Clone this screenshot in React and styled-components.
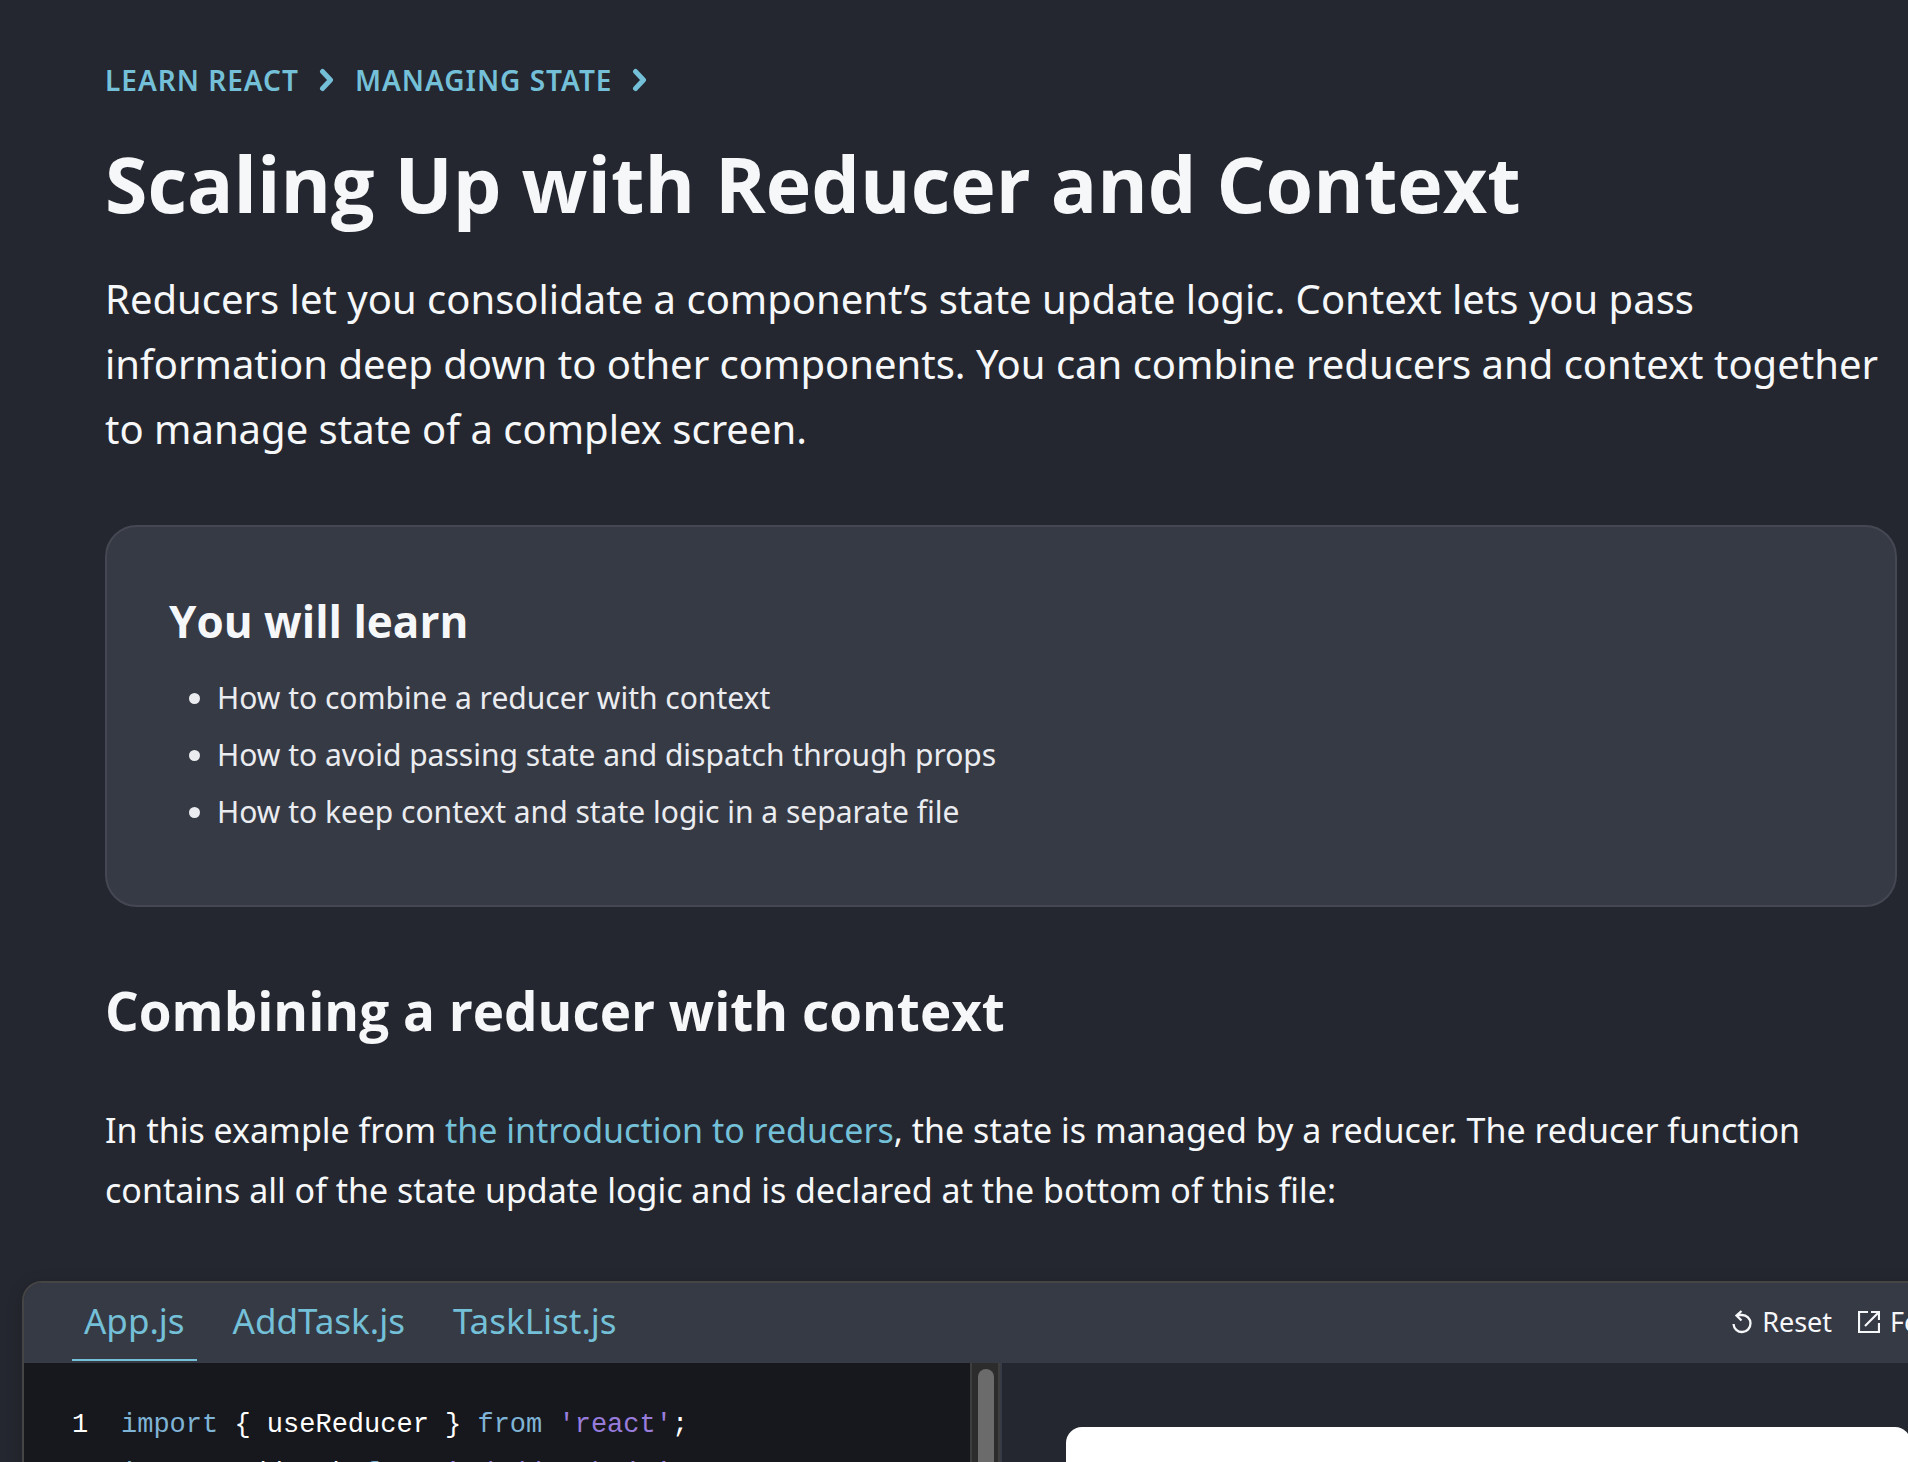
import React from "react"
import styled, { createGlobalStyle } from "styled-components"

const font = {
  heading: `"Open Sans", "Noto Sans", sans-serif`,
  body: `"Noto Sans", "Open Sans", sans-serif`,
  code: `"Liberation Mono", "DejaVu Sans Mono", monospace`,
}

const GlobalStyle = createGlobalStyle`
  :root {
    --clr-page: #24272f;
    --clr-card: #363a45;
    --clr-code: #17181d;
    --clr-border: #454852;
    --clr-border-dark: #454545;
    --clr-text: #f6f7f9;
    --clr-list: #ebecf0;
    --clr-link: #74c0d8;
  }

  * {
    box-sizing: border-box;
  }

  html,
  body {
    margin: 0;
    overflow: hidden;
    background: var(--clr-page);
  }

  h1,
  h2,
  h3,
  p,
  ul,
  pre {
    margin: 0;
  }

  a {
    color: var(--clr-link);
    text-decoration: none;
  }
`

const Page = styled.main`
  height: 100vh;
  overflow: hidden;
  padding: 60px 0 0 22px;
  color: var(--clr-text);
  font-family: ${font.body};
`

const Content = styled.div`
  padding: 0 11px 0 83px;
`

const Breadcrumbs = styled.nav`
  display: flex;
  align-items: center;
  gap: 20px;
`

const Crumb = styled.a`
  display: flex;
  align-items: center;
  gap: 20px;
  font-size: 28px;
  line-height: 40px;
  font-weight: 600;
  letter-spacing: 1px;
  text-transform: uppercase;
`

const Title = styled.h1`
  margin-top: 34px;
  font-family: ${font.heading};
  font-size: 77px;
  line-height: 100px;
  font-weight: 700;
`

const Intro = styled.p`
  margin-top: 32px;
  font-size: 40px;
  line-height: 65px;
`

const LearnCard = styled.section`
  margin-top: 64px;
  padding: 64px 62px 69px;
  border: 2px solid var(--clr-border);
  border-radius: 32px;
  background: var(--clr-card);
`

const LearnTitle = styled.h3`
  font-family: ${font.heading};
  font-size: 44px;
  line-height: 60px;
  font-weight: 700;
`

const LearnList = styled.ul`
  display: flex;
  flex-direction: column;
  gap: 8px;
  margin-top: 22px;
  padding-left: 48px;
  color: var(--clr-list);
  font-size: 30px;
  line-height: 49px;
`

const Heading = styled.h2`
  margin-top: 69px;
  font-family: ${font.heading};
  font-size: 53px;
  line-height: 70px;
  font-weight: 700;
`

const Paragraph = styled.p`
  margin-top: 54px;
  font-size: 34px;
  line-height: 60px;
`

/* the playground is wider than the window and runs off its right edge */
const Sandbox = styled.section`
  margin: 61px -69px 0 0;
  border: 2px solid var(--clr-border-dark);
  border-radius: 20px;
  overflow: hidden;
  box-shadow: 0 2px 16px rgba(0, 0, 0, 0.15);
`

const Toolbar = styled.header`
  display: flex;
  align-items: stretch;
  justify-content: space-between;
  height: 80px;
  padding: 0 29px 2px 48px;
  background: var(--clr-card);
`

const Tabs = styled.div`
  display: flex;
  gap: 24px;
`

const Tab = styled.button`
  padding: 0 12px;
  border: 0;
  border-bottom: 2px solid
    ${({ $active }) => ($active ? "var(--clr-link)" : "transparent")};
  background: none;
  color: var(--clr-link);
  font-family: inherit;
  font-size: 35px;
  line-height: 48px;
`

const Actions = styled.div`
  display: flex;
  align-items: center;
  gap: 26px;
`

const Action = styled.button`
  display: flex;
  align-items: center;
  gap: 10px;
  padding: 0;
  border: 0;
  background: none;
  color: var(--clr-text);
  font-family: inherit;
  font-size: 27px;
  line-height: 40px;
`

const Panes = styled.div`
  display: grid;
  grid-template-columns: 1fr 1fr;
  height: 320px;
`

const Editor = styled.div`
  display: flex;
  background: var(--clr-code);
`

const Code = styled.pre`
  flex: 1;
  padding: 38px 0 0 48px;
  overflow: hidden;
  color: #fff;
  font-family: ${font.code};
  font-size: 27px;
  line-height: 49px;
`

const LineNumber = styled.span`
  display: inline-block;
  width: 49px;
`

const Keyword = styled.span`
  color: #7fb3d6;
`

const Str = styled.span`
  color: #977cdc;
`

const Scrollbar = styled.div`
  width: 30px;
  padding: 6px 4px 0 6px;
  border: 2px solid #3e3e3e;
  border-width: 0 2px;
  background: #2c2c2c;
`

const Thumb = styled.div`
  width: 16px;
  height: 280px;
  border-radius: 8px;
  background: #6b6b6b;
`

const Preview = styled.div`
  padding: 64px;
  border-left: 2px solid var(--clr-card);
  background: var(--clr-page);
`

const PreviewFrame = styled.div`
  height: 100%;
  border-radius: 16px;
  background: #fff;
`

const Chevron = () => (
  <svg width="16" height="24" viewBox="0 0 16 24" fill="none" aria-hidden="true">
    <path
      d="M3.500 3.500 11.500 12 3.500 20.500"
      stroke="currentColor"
      strokeWidth="5"
      strokeLinecap="round"
      strokeLinejoin="round"
    />
  </svg>
)

const ResetIcon = () => (
  <svg width="20" height="24" viewBox="0 0 20 24" fill="none" aria-hidden="true">
    <path
      d="M1.500 14a8.500 8.500 0 1 0 8.500-9H4.500M9.500 1 4.500 5.500 9.500 10.500"
      stroke="currentColor"
      strokeWidth="2.300"
    />
  </svg>
)

const OpenIcon = () => (
  <svg width="22" height="22" viewBox="0 0 22 22" fill="none" aria-hidden="true">
    <path
      d="M10 1H1v20h20v-9M13 1h8v8M21 1 7 15"
      stroke="currentColor"
      strokeWidth="2.200"
    />
  </svg>
)

export default function App() {
  return (
    <>
      <GlobalStyle />
      <Page>
        <Content>
          <Breadcrumbs aria-label="Breadcrumb">
            <Crumb href="#learn">
              Learn React
              <Chevron />
            </Crumb>
            <Crumb href="#managing-state">
              Managing State
              <Chevron />
            </Crumb>
          </Breadcrumbs>
          <Title>Scaling Up with Reducer and Context</Title>
          <Intro>
            Reducers let you consolidate a component’s state update logic.
            Context lets you pass information deep down to other components. You
            can combine reducers and context together to manage state of a
            complex screen.
          </Intro>
          <LearnCard>
            <LearnTitle>You will learn</LearnTitle>
            <LearnList>
              <li>How to combine a reducer with context</li>
              <li>How to avoid passing state and dispatch through props</li>
              <li>How to keep context and state logic in a separate file</li>
            </LearnList>
          </LearnCard>
          <Heading>Combining a reducer with context</Heading>
          <Paragraph>
            In this example from{" "}
            <a href="#reducers">the introduction to reducers</a>, the state is
            managed by a reducer. The reducer function contains all of the state
            update logic and is declared at the bottom of this file:
          </Paragraph>
        </Content>
        <Sandbox>
          <Toolbar>
            <Tabs role="tablist">
              <Tab role="tab" aria-selected="true" $active>
                App.js
              </Tab>
              <Tab role="tab" aria-selected="false">
                AddTask.js
              </Tab>
              <Tab role="tab" aria-selected="false">
                TaskList.js
              </Tab>
            </Tabs>
            <Actions>
              <Action>
                <ResetIcon />
                Reset
              </Action>
              <Action>
                <OpenIcon />
                Fork
              </Action>
            </Actions>
          </Toolbar>
          <Panes>
            <Editor>
              <Code>
                <LineNumber>1</LineNumber>
                <Keyword>import</Keyword>
                {" { useReducer } "}
                <Keyword>from</Keyword> <Str>'react'</Str>;{"\n"}
                <LineNumber>2</LineNumber>
                <Keyword>import</Keyword>
                {" AddTask "}
                <Keyword>from</Keyword> <Str>'./AddTask.js'</Str>;
              </Code>
              <Scrollbar>
                <Thumb />
              </Scrollbar>
            </Editor>
            <Preview>
              <PreviewFrame />
            </Preview>
          </Panes>
        </Sandbox>
      </Page>
    </>
  )
}
